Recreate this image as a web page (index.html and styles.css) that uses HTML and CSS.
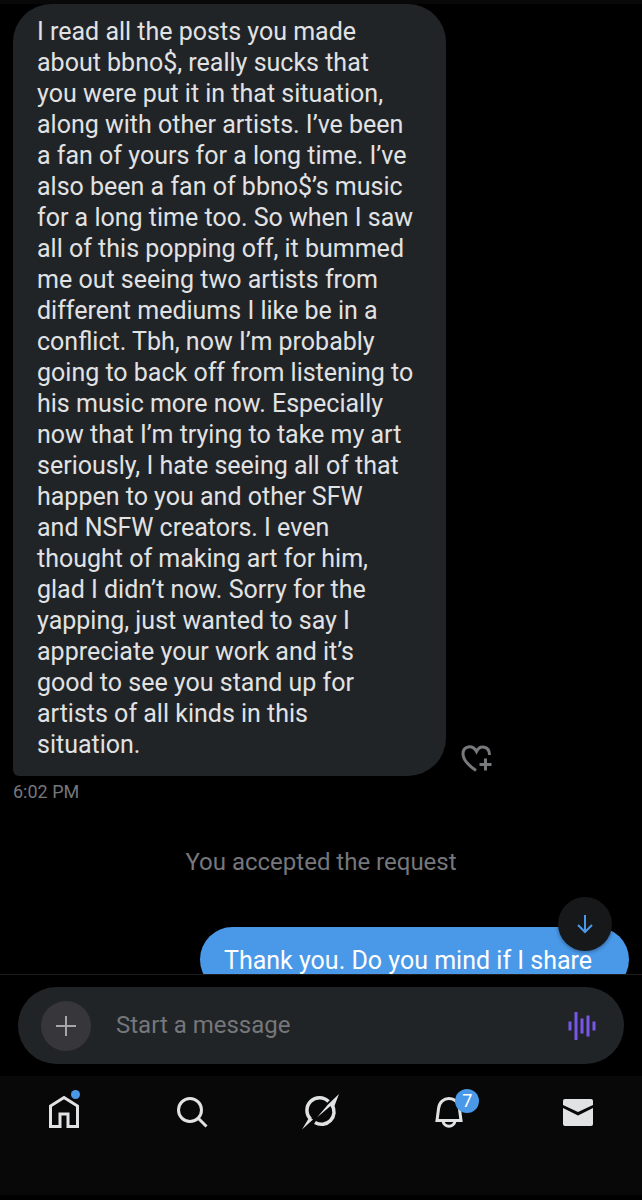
FILE: index.html
```html
<!DOCTYPE html>
<html lang="en">
<head>
<meta charset="utf-8">
<meta name="viewport" content="width=device-width, initial-scale=1">
<title>Messages</title>
<link rel="stylesheet" href="styles.css">
</head>
<body>
<div class="app">
  <div class="topbar"></div>
  <main class="thread">
    <div class="row">
      <p class="bubble bubble-in">I read all the posts you made<br>about bbno$, really sucks that<br>you were put it in that situation,<br>along with other artists. I’ve been<br>a fan of yours for a long time. I’ve<br>also been a fan of bbno$’s music<br>for a long time too. So when I saw<br>all of this popping off, it bummed<br>me out seeing two artists from<br>different mediums I like be in a<br>conflict. Tbh, now I’m probably<br>going to back off from listening to<br>his music more now. Especially<br>now that I’m trying to take my art<br>seriously, I hate seeing all of that<br>happen to you and other SFW<br>and NSFW creators. I even<br>thought of making art for him,<br>glad I didn’t now. Sorry for the<br>yapping, just wanted to say I<br>appreciate your work and it’s<br>good to see you stand up for<br>artists of all kinds in this<br>situation.</p>
      <button class="react" type="button" aria-label="Add reaction">
        <svg width="32" height="28" viewBox="0 0 32 28" fill="none" stroke="currentColor" stroke-width="3">
          <path d="M15 25.500C7 20 2 15 2 9C2 .5 11.500-.5 15.500 6.500C19-.5 28.500 1 28.500 10"/>
          <path d="M24.500 13.500v12M18.500 19.500h12"/>
        </svg>
      </button>
    </div>
    <time class="time">6:02 PM</time>
    <p class="notice">You accepted the request</p>
    <div class="row row-out">
      <p class="bubble bubble-out">Thank you. Do you mind if I share</p>
    </div>
    <button class="jump" type="button" aria-label="Jump to latest">
      <svg width="16" height="20" viewBox="0 0 16 20" fill="none" stroke="currentColor" stroke-width="2"><path d="M8 1v17M1 11l7 7 7-7"/></svg>
    </button>
  </main>
  <form class="composer">
    <div class="field">
      <button class="add" type="button" aria-label="Add attachment">
        <svg width="20" height="20" viewBox="0 0 20 20" stroke="currentColor" stroke-width="2"><path d="M10 0v20M0 10h20"/></svg>
      </button>
      <input class="input" type="text" placeholder="Start a message" aria-label="Start a message">
      <button class="voice" type="button" aria-label="Record voice message">
        <svg width="28" height="28" viewBox="0 0 28 28" fill="currentColor"><path d="M.5 9.500h3v9h-3zM6.500 0h3v28h-3zM12.500 6.500h3v15h-3zM18.500 3.500h3v21h-3zM24.500 9.500h3v9h-3z"/></svg>
      </button>
    </div>
  </form>
  <nav class="tabs" aria-label="Main">
    <a class="tab" href="#home" aria-label="Home">
      <span class="icon">
        <svg width="36" height="36" viewBox="0 0 36 36" fill="none" stroke="currentColor" stroke-width="3"><path d="M4.500 33.500V13L18 4.500 31.500 13v20.500H22V21h-8v12.500z"/></svg>
        <span class="dot"></span>
      </span>
    </a>
    <a class="tab" href="#search" aria-label="Search">
      <span class="icon">
        <svg width="36" height="36" viewBox="0 0 36 36" fill="none" stroke="currentColor" stroke-width="3"><circle cx="15" cy="17" r="11.500"/><path d="M23 25l8.500 8.500"/></svg>
      </span>
    </a>
    <a class="tab" href="#grok" aria-label="Grok">
      <span class="icon">
        <svg width="40" height="40" viewBox="0 0 40 40" fill="none"><path d="M27.500 10.500A12.500 12.500 0 0 0 9.500 28M14 31.500A12.500 12.500 0 0 0 31 14" stroke="currentColor" stroke-width="3.500"/><path d="M38 3L32.500 17.500 29.500 15 16 26.500 27 13.500zM1 38.500L8.500 26 12 28.500z" fill="currentColor"/></svg>
      </span>
    </a>
    <a class="tab" href="#notifications" aria-label="Notifications, 7 new">
      <span class="icon">
        <svg width="36" height="36" viewBox="0 0 36 36" fill="none" stroke="currentColor" stroke-width="3"><path d="M6 27.500L7.500 16C8.500 2 27.500 2 28.500 16L30 27.500zM12 28C13 35 23 35 24 28"/></svg>
        <span class="badge">7</span>
      </span>
    </a>
    <a class="tab" href="#messages" aria-label="Messages">
      <span class="icon">
        <svg width="36" height="36" viewBox="0 0 36 36" fill="currentColor"><path d="M3 12V8q0-2 2-2h26q2 0 2 2v4L18 19zM3 15l15 7.500L33 15v16q0 2-2 2H5q-2 0-2-2z"/></svg>
      </span>
    </a>
  </nav>
</div>
</body>
</html>
```
FILE: styles.css
```css
* { box-sizing: border-box; }

body {
  margin: 0;
  background: #000;
  color: #e1e2e3;
  font-family: Roboto, "Liberation Sans", sans-serif;
  font-size: 25px;
  line-height: 31px;
}

p { margin: 0; }

button {
  padding: 0;
  border: 0;
  background: none;
  color: inherit;
  font: inherit;
}

svg { display: block; }

.app {
  display: flex;
  flex-direction: column;
  height: 100vh;
  padding-bottom: 5px;
}

.topbar {
  flex: none;
  height: 4px;
  background: #080808;
}

.thread {
  position: relative;
  flex: 1;
  min-height: 0;
  overflow: hidden;
  padding: 0 13px;
}

.row {
  display: flex;
  align-items: flex-end;
  gap: 15px;
}

.row-out { justify-content: flex-end; }

.bubble {
  padding: 12px 24px 16px;
  border-radius: 38px;
  white-space: nowrap;
}

.bubble-in {
  flex: 0 1 433px;
  border-bottom-left-radius: 6px;
  background: #212427;
}

.bubble-out {
  flex: 0 1 429px;
  padding-top: 18px;
  background: #4a99e9;
  color: #fff;
}

.react {
  margin-bottom: 3px;
  color: #78797c;
}

.time {
  display: block;
  margin-top: 4px;
  color: #75777a;
  font-size: 18px;
  line-height: 24px;
}

.notice {
  margin: 43px 0 49px;
  color: #75777a;
  font-size: 24px;
  text-align: center;
}

.jump {
  position: absolute;
  right: 30px;
  bottom: 23px;
  display: grid;
  place-items: center;
  width: 54px;
  height: 54px;
  border-radius: 50%;
  background: #16181a;
  box-shadow: 0 1px 4px rgba(0, 0, 0, 0.4);
  color: #4a99e9;
}

.composer {
  flex: none;
  padding: 12px 18px;
  border-top: 1px solid #1c1d1f;
}

.field {
  display: flex;
  align-items: center;
  gap: 25px;
  height: 77px;
  padding: 0 28px 0 23px;
  border-radius: 39px;
  background: #212427;
}

.add {
  display: grid;
  place-items: center;
  flex: none;
  width: 50px;
  height: 50px;
  border-radius: 50%;
  background: #37373b;
  color: #a6a6aa;
}

.input {
  flex: 1;
  min-width: 0;
  padding: 0;
  border: 0;
  outline: 0;
  background: none;
  color: inherit;
  font: inherit;
  font-size: 24px;
}

.input::placeholder {
  color: #75777a;
  opacity: 1;
}

.voice { color: #7856e8; }

.tabs {
  display: grid;
  grid-template-columns: repeat(5, 1fr);
  flex: none;
  height: 119px;
  padding-top: 15px;
  background: #080808;
}

.tab {
  display: flex;
  justify-content: center;
  color: #e1e2e3;
  text-decoration: none;
}

.icon {
  position: relative;
  display: grid;
  place-items: center;
  width: 40px;
  height: 40px;
}

.dot {
  position: absolute;
  top: -1px;
  right: 4px;
  width: 9px;
  height: 9px;
  border-radius: 50%;
  background: #4a99e9;
}

.badge {
  position: absolute;
  top: -2px;
  right: -10px;
  width: 24px;
  height: 24px;
  border-radius: 50%;
  background: #4a99e9;
  color: #fff;
  font-size: 18px;
  line-height: 24px;
  text-align: center;
}
```
